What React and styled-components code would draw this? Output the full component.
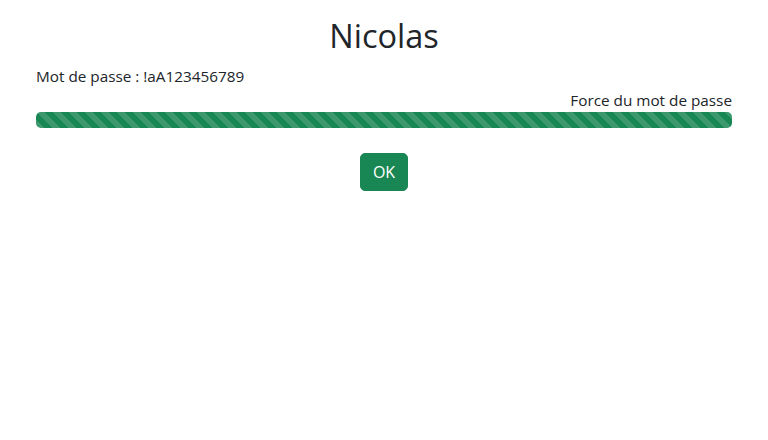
import React from "react";
import styled, { createGlobalStyle } from "styled-components";

const GlobalStyle = createGlobalStyle`
  * { box-sizing: border-box; }
  body {
    margin: 0;
    background: #fff;
    color: #212529;
    font-family: "Open Sans", "Noto Sans", sans-serif;
    font-size: 16px;
    line-height: 1.5;
  }
`;

const Container = styled.div`
  width: 720px;
  margin: 0 auto;
  padding: 16px 12px 0;
`;

const Title = styled.h1`
  margin: 0 0 8px;
  font-size: 32.5px;
  font-weight: 400;
  line-height: 40px;
  text-align: center;
`;

const Line = styled.p`
  margin: 0;
  height: 24px;
  line-height: 24px;
  font-size: 15.3px;
  text-align: ${props => (props.right ? "right" : "left")};
`;

const Progress = styled.div`
  display: flex;
  height: 16px;
  background: #e9ecef;
  border-radius: 5px;
  overflow: hidden;
`;

const Bar = styled.div`
  background-color: #198754;
  background-image: linear-gradient(
    45deg,
    rgba(255, 255, 255, 0.15) 25%,
    transparent 25%,
    transparent 50%,
    rgba(255, 255, 255, 0.15) 50%,
    rgba(255, 255, 255, 0.15) 75%,
    transparent 75%,
    transparent
  );
  background-size: 16px 16px;
`;

const Actions = styled.div`
  display: flex;
  justify-content: center;
  margin-top: 25px;
`;

const Button = styled.button`
  height: 38px;
  padding: 0 12px;
  border: 1px solid #198754;
  border-radius: 5px;
  background: #198754;
  color: #fff;
  font-family: inherit;
  font-size: 16px;
  cursor: pointer;
`;

const App = () => {
  const strength = 100;
  return (
    <>
      <GlobalStyle />
      <Container>
        <Title>Nicolas</Title>
        <Line>Mot de passe : !aA123456789</Line>
        <Line right>Force du mot de passe</Line>
        <Progress>
          <Bar style={{ width: `${strength}%` }} />
        </Progress>
        <Actions>
          <Button>OK</Button>
        </Actions>
      </Container>
    </>
  );
};

export default App;
